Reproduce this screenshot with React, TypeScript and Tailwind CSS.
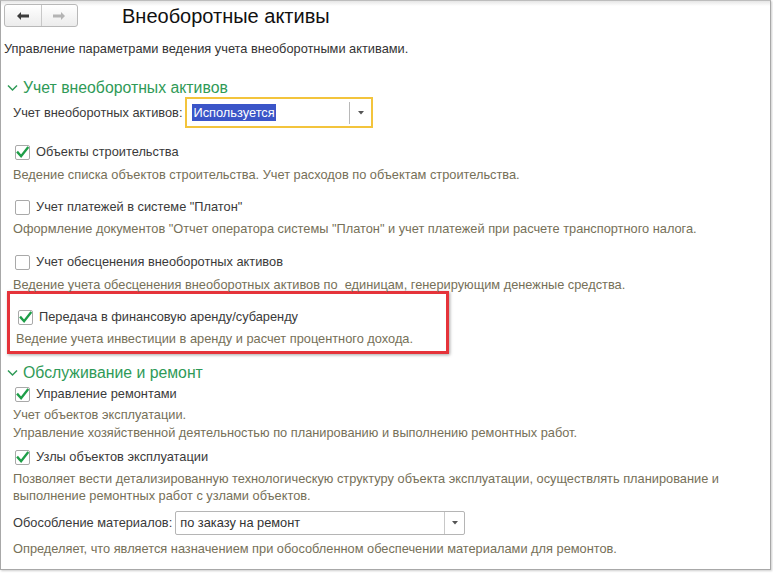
import React from "react";

const font = { fontFamily: '"Liberation Sans", Arial, sans-serif' };

function Check({ checked }: { checked: boolean }) {
  return (
    <div className="w-[15px] h-[15px] border border-[#a9a9a9] rounded-[2px] bg-white flex items-center justify-center shrink-0">
      {checked && (
        <svg width="14" height="13" viewBox="0 0 14 13">
          <path d="M2 6.5 L5.5 10.5 L12.5 1.5" fill="none" stroke="#1e9e48" strokeWidth="2.6" strokeLinecap="square" />
        </svg>
      )}
    </div>
  );
}

function CheckRow({ checked, label }: { checked: boolean; label: string }) {
  return (
    <div className="flex items-center gap-[6px] pl-[14px] h-[20px]">
      <Check checked={checked} />
      <span className="text-[12.8px] text-[#3a3a3a]">{label}</span>
    </div>
  );
}

function Desc({ children }: { children: React.ReactNode }) {
  return <div className="pl-[12px] text-[12.8px] leading-[17px] text-[#767058]">{children}</div>;
}

function Section({ title }: { title: string }) {
  return (
    <div className="flex items-center gap-[5px] pl-[6px] h-[20px]">
      <svg width="11" height="8" viewBox="0 0 11 8">
        <path d="M1 1.5 L5.5 6 L10 1.5" fill="none" stroke="#2f9a57" strokeWidth="1.5" />
      </svg>
      <span className="text-[15.8px] text-[#2f9a57]">{title}</span>
    </div>
  );
}

export default function App() {
  return (
    <div className="w-[773px] h-[573px] bg-white" style={font}>
      <div className="w-[771px] h-[570px] border border-[#a8a8a8] border-t-[#bdbdbd] shadow-[1px_1px_2px_rgba(0,0,0,0.2)] relative overflow-hidden">
        <div className="absolute left-0 right-0 top-0 h-[5px] bg-gradient-to-b from-[#e6e6e6] to-white" />
        {/* Toolbar */}
        <div className="relative flex items-center h-[28px] pt-[1px]">
          <div className="ml-[3px] flex w-[74px] h-[23px] border border-[#b8b8b8] rounded-[3px] bg-gradient-to-b from-white to-[#ececec]">
            <div className="flex-1 flex items-center justify-center border-r border-[#c8c8c8]">
              <svg width="14" height="10" viewBox="0 0 14 10">
                <path d="M1 5 L5 1 L5 3.5 L13 3.5 L13 6.5 L5 6.5 L5 9 Z" fill="#3c3c3c" />
              </svg>
            </div>
            <div className="flex-1 flex items-center justify-center">
              <svg width="14" height="10" viewBox="0 0 14 10">
                <path d="M13 5 L9 1 L9 3.5 L1 3.5 L1 6.5 L9 6.5 L9 9 Z" fill="#b4b4b4" />
              </svg>
            </div>
          </div>
          <div className="ml-[44px] text-[20px] text-[#111] leading-none mt-[1px]">Внеоборотные активы</div>
        </div>
        <div className="pl-[3px] mt-[11px] text-[12.8px] text-[#333] leading-[18px]">
          Управление параметрами ведения учета внеоборотными активами.
        </div>
        <div className="mt-[20px]">
          <Section title="Учет внеоборотных активов" />
        </div>
        <div className="flex items-center pl-[12px] -mt-[1px] h-[31px]">
          <span className="text-[12.8px] text-[#3a3a3a]">Учет внеоборотных активов:</span>
          <div className="ml-[3px] w-[188px] h-[31px] border-2 border-[#f3c43c] flex items-center bg-white">
            <div className="flex-1 flex items-center pl-[5px]">
              <span className="bg-[#3b55c8] text-white text-[12.8px] leading-[17px] px-[1px]">Используется</span>
            </div>
            <div className="w-[22px] h-[22px] border-l border-[#b8b8b8] flex items-center justify-center">
              <svg width="6" height="4" viewBox="0 0 6 4"><path d="M0 0 L6 0 L3 3.5 Z" fill="#555" /></svg>
            </div>
          </div>
        </div>
        <div className="mt-[14px]">
          <CheckRow checked label="Объекты строительства" />
        </div>
        <div className="mt-[4px]">
          <Desc>Ведение списка объектов строительства. Учет расходов по объектам строительства.</Desc>
        </div>
        <div className="mt-[14px]">
          <CheckRow checked={false} label='Учет платежей в системе "Платон"' />
        </div>
        <div className="mt-[3px]">
          <Desc>Оформление документов "Отчет оператора системы "Платон" и учет платежей при расчете транспортного налога.</Desc>
        </div>
        <div className="mt-[15px]">
          <CheckRow checked={false} label="Учет обесценения внеоборотных активов" />
        </div>
        <div className="mt-[4px]">
          <Desc>Ведение учета обесценения внеоборотных активов по&nbsp; единицам, генерирующим денежные средства.</Desc>
        </div>
        <div className="ml-[6px] -mt-[2px] w-[442px] h-[63px] border-[3px] border-[#e5333a] shadow-[1px_1px_3px_rgba(0,0,0,0.35)] pt-[13px]">
          <div className="-ml-[6px]">
            <CheckRow checked label="Передача в финансовую аренду/субаренду" />
            <div className="mt-[3px]">
              <Desc>Ведение учета инвестиции в аренду и расчет процентного дохода.</Desc>
            </div>
          </div>
        </div>
        <div className="mt-[9px]">
          <Section title="Обслуживание и ремонт" />
        </div>
        <div className="mt-[1px]">
          <CheckRow checked label="Управление ремонтами" />
        </div>
        <div className="mt-[2px]">
          <Desc>
            <div className="leading-[18px]">Учет объектов эксплуатации.</div>
            Управление хозяйственной деятельностью по планированию и выполнению ремонтных работ.
          </Desc>
        </div>
        <div className="mt-[6px]">
          <CheckRow checked label="Узлы объектов эксплуатации" />
        </div>
        <div className="mt-[3px]">
          <Desc>
            Позволяет вести детализированную технологическую структуру объекта эксплуатации, осуществлять планирование и
            <br />
            выполнение ремонтных работ с узлами объектов.
          </Desc>
        </div>
        <div className="flex items-center pl-[12px] mt-[7px] h-[24px]">
          <span className="text-[12.8px] text-[#3a3a3a]">Обособление материалов:</span>
          <div className="ml-[3px] w-[290px] h-[24px] border border-[#b5b5b5] rounded-[2px] flex items-center bg-white">
            <div className="flex-1 pl-[4px] text-[12.8px] text-[#333]">по заказу на ремонт</div>
            <div className="w-[20px] h-[22px] border-l border-[#c8c8c8] flex items-center justify-center">
              <svg width="6" height="4" viewBox="0 0 6 4"><path d="M0 0 L6 0 L3 3.5 Z" fill="#555" /></svg>
            </div>
          </div>
        </div>
        <div className="mt-[5px]">
          <Desc>Определяет, что является назначением при обособленном обеспечении материалами для ремонтов.</Desc>
        </div>
      </div>
    </div>
  );
}
